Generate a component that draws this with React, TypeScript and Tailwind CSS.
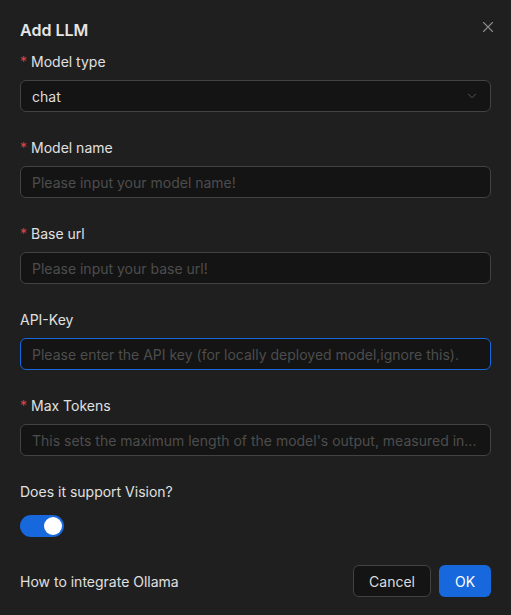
import { ChevronDown, X } from 'lucide-react';

type FieldProps = {
  label: string;
  required?: boolean;
  children: React.ReactNode;
};

function Field({ label, required, children }: FieldProps) {
  return (
    <div className="mb-6">
      <div className="flex h-[22px] items-center mb-2 text-[14px] text-[#e0e0e0]">
        {required && <span className="text-[#dc4446] mr-1 text-[14px]">*</span>}
        {label}
      </div>
      {children}
    </div>
  );
}

function Input({ placeholder, focused }: { placeholder: string; focused?: boolean }) {
  return (
    <input
      placeholder={placeholder}
      className={
        'block w-full h-8 rounded-md bg-[#141414] px-[11px] text-[14px] text-[#dcdcdc] placeholder:text-[#4d4d4d] outline-none border ' +
        (focused ? 'border-[#1668dc]' : 'border-[#424242]')
      }
    />
  );
}

export default function App() {
  return (
    <div
      className="w-[511px] h-[615px] bg-[#1f1f1f] px-5 pt-[18px] relative"
      style={{ fontFamily: 'Inter, "Noto Sans", sans-serif' }}
    >
      <button className="absolute right-[14px] top-[18px] text-[#8a8a8a]">
        <X size={18} strokeWidth={1.5} />
      </button>
      <h2 className="text-[16px] font-semibold text-[#e5e5e5] leading-6 mb-2">Add LLM</h2>

      <Field label="Model type" required>
        <div className="flex items-center justify-between h-8 rounded-md bg-[#141414] border border-[#424242] px-[11px] text-[14px] text-[#dcdcdc]">
          <span>chat</span>
          <ChevronDown size={14} strokeWidth={1.5} className="text-[#5e5e5e]" />
        </div>
      </Field>

      <Field label="Model name" required>
        <Input placeholder="Please input your model name!" />
      </Field>

      <Field label="Base url" required>
        <Input placeholder="Please input your base url!" />
      </Field>

      <Field label="API-Key">
        <Input placeholder="Please enter the API key (for locally deployed model,ignore this)." focused />
      </Field>

      <Field label="Max Tokens" required>
        <Input placeholder="This sets the maximum length of the model's output, measured in..." />
      </Field>

      <div className="flex h-[22px] items-center mb-[13px] text-[14px] text-[#e0e0e0]">Does it support Vision?</div>
      <div className="w-11 h-[22px] rounded-full bg-[#1668dc] flex items-center justify-end pr-[2px]">
        <div className="w-[18px] h-[18px] rounded-full bg-white" />
      </div>

      <div className="flex items-center justify-between mt-7">
        <span className="text-[14px] text-[#e0e0e0]">How to integrate Ollama</span>
        <div className="flex gap-2">
          <button className="h-8 px-[15px] rounded-md border border-[#424242] bg-[#141414] text-[14px] text-[#dcdcdc]">
            Cancel
          </button>
          <button className="h-8 w-[52px] rounded-md bg-[#1668dc] text-[14px] text-white">OK</button>
        </div>
      </div>
    </div>
  );
}
